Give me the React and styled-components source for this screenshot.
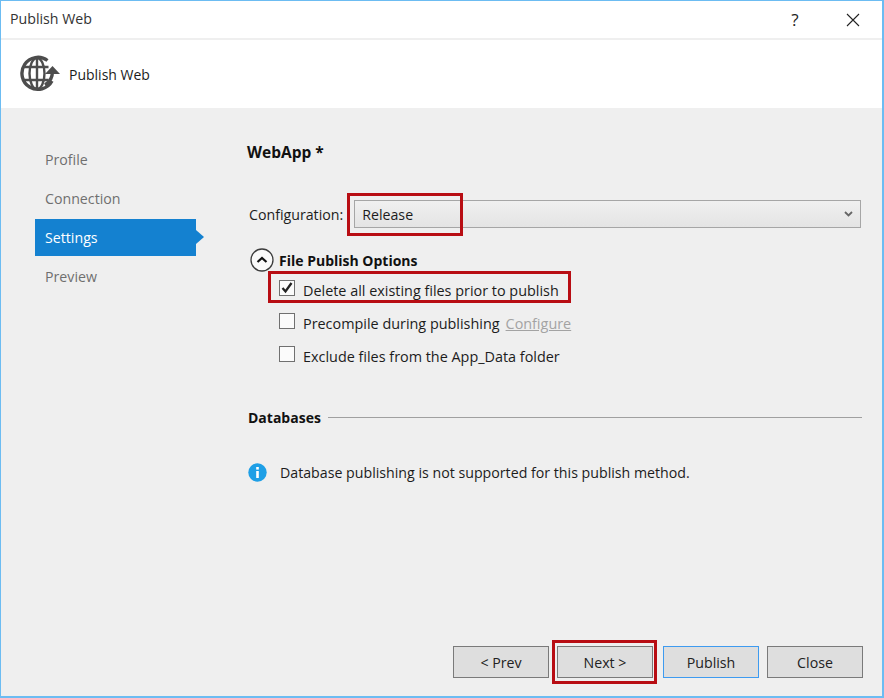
import React from "react";
import styled, { createGlobalStyle } from "styled-components";

const GlobalStyle = createGlobalStyle`
  html, body {
    margin: 0;
    padding: 0;
    background: #efefef;
  }
  * {
    box-sizing: border-box;
  }
`;

const Window = styled.div`
  width: 884px;
  height: 698px;
  display: flex;
  flex-direction: column;
  background: #efefef;
  border: 1px solid #6cbcf2;
  border-width: 1px 2px 2px 1px;
  font-family: "Open Sans", "Liberation Sans", sans-serif;
  font-size: 14.2px;
  color: #1c1c1c;
  overflow: hidden;
`;

const TitleBar = styled.div`
  height: 37px;
  flex: none;
  display: flex;
  align-items: center;
  padding: 0 19px 0 9px;
  background: #fff;
  color: #333;
`;

const TitleText = styled.span`
  flex: 1;
  margin-top: -2px;
`;

const TitleButton = styled.button`
  width: 20px;
  height: 20px;
  margin-left: 38px;
  padding: 0;
  border: 0;
  background: none;
  font: inherit;
  font-size: 17px;
  color: #222;
  display: flex;
  align-items: center;
  justify-content: center;
`;

const Header = styled.div`
  height: 68px;
  flex: none;
  margin-top: 2px;
  display: flex;
  align-items: center;
  gap: 7px;
  padding: 0 0 0 18px;
  background: #fff;
  font-size: 14px;
`;

const HeaderText = styled.span`
  margin-top: 1px;
`;

const Body = styled.div`
  flex: 1;
  display: flex;
  min-height: 0;
`;

const Sidebar = styled.nav`
  width: 195px;
  flex: none;
  padding: 33px 0 0 34px;
  display: flex;
  flex-direction: column;
  gap: 2px;
`;

const NavItem = styled.div`
  position: relative;
  width: 161px;
  height: 37px;
  padding: 0 0 1px 10px;
  display: flex;
  align-items: center;
  color: ${(props) => (props.active ? "#fff" : "#6f6f6f")};
  background: ${(props) => (props.active ? "#1481d0" : "transparent")};
  ${(props) =>
    props.active &&
    `&::after {
      content: "";
      position: absolute;
      left: 100%;
      top: 11px;
      border-left: 8px solid #1481d0;
      border-top: 7px solid transparent;
      border-bottom: 7px solid transparent;
    }`}
`;

const Main = styled.div`
  flex: 1;
  padding: 32px 21px 0 51px;
  display: flex;
  flex-direction: column;
`;

const ProfileName = styled.div`
  font-size: 15.5px;
  font-weight: 700;
  line-height: 24px;
  color: #111;
`;

const ConfigRow = styled.div`
  margin-top: 36px;
  display: flex;
  align-items: center;
  gap: 6px;
  padding-left: 2px;
`;

const Select = styled.div`
  position: relative;
  flex: 1;
  height: 28px;
  display: flex;
  align-items: center;
  justify-content: space-between;
  padding: 0 7px;
  background: linear-gradient(#f0f0f0, #e4e4e4);
  border: 1px solid #a6a6a6;
  margin-left: 5px;
`;

const Highlight = styled.span`
  position: absolute;
  top: ${(props) => props.top}px;
  left: ${(props) => props.left}px;
  width: ${(props) => props.w}px;
  height: ${(props) => props.h}px;
  border: 3px solid #b80d13;
  pointer-events: none;
`;

const SectionTitle = styled.div`
  display: flex;
  align-items: center;
  gap: 5px;
  margin-top: 20px;
  padding-left: 3px;
  height: 24px;
  font-size: 14px;
  font-weight: 700;
  color: #111;
`;

const Options = styled.div`
  padding-left: 32px;
  display: flex;
  flex-direction: column;
  gap: 9px;
  margin-top: 6px;
  font-size: 14.4px;
`;

const OptionRow = styled.div`
  position: relative;
  display: flex;
  align-items: center;
  gap: 8px;
  height: 24px;
`;

const Checkbox = styled.span`
  width: 16px;
  height: 16px;
  flex: none;
  background: #fbfbfb;
  border: 1px solid #707070;
  margin-top: -5px;
  display: flex;
  align-items: center;
  justify-content: center;
`;

const ConfigureLink = styled.span`
  margin-left: -2px;
  color: #a3a3a3;
  text-decoration: underline;
`;

const DatabasesRow = styled.div`
  margin-top: 37px;
  margin-right: -1px;
  display: flex;
  align-items: center;
  gap: 7px;
  height: 24px;
  padding-left: 1px;
  font-size: 14px;
  font-weight: 700;
  color: #111;
`;

const Rule = styled.span`
  flex: 1;
  height: 1px;
  background: #a0a0a0;
`;

const InfoRow = styled.div`
  margin-top: 31px;
  display: flex;
  align-items: center;
  gap: 13px;
  height: 24px;
  padding-left: 1px;
`;

const Footer = styled.div`
  flex: none;
  height: 50px;
  display: flex;
  justify-content: flex-end;
  padding-right: 19px;
`;

const Button = styled.button`
  position: relative;
  width: 96px;
  height: 32px;
  margin-left: ${(props) => props.gap || 8}px;
  padding: 0;
  background: #dedede;
  border: 1px solid ${(props) => (props.focused ? "#3e9bf0" : "#7a7a7a")};
  font: inherit;
  color: #222;
`;

const GlobeIcon = () => (
  <svg width="43" height="38" viewBox="0 0 43 38" fill="none">
    <g stroke="#4d4d4d">
      <path d="M28.5 5.5A16 16 0 1 0 33 26" strokeWidth="3.4" />
      <ellipse cx="18" cy="18.5" rx="7.5" ry="15.5" strokeWidth="2.4" />
      <path d="M18 3v31M4.5 12h25M4.5 25h25" strokeWidth="2.4" />
    </g>
    <path d="M26 30c5-3 7.5-8 7.5-14" stroke="#4d4d4d" strokeWidth="3.4" />
    <path d="M26 19l7.5-8 7.5 8z" fill="#4d4d4d" />
  </svg>
);

const CollapseIcon = () => (
  <svg width="24" height="24" viewBox="0 0 24 24" fill="none">
    <circle cx="12" cy="12" r="11" fill="#fafafa" stroke="#3c3c3c" strokeWidth="1.3" />
    <path d="M7.5 14l4.5-4 4.5 4" stroke="#111" strokeWidth="2.2" />
  </svg>
);

const InfoIcon = () => (
  <svg width="19" height="19" viewBox="0 0 19 19">
    <circle cx="9.5" cy="9.5" r="9.2" fill="#1e9fe6" />
    <rect x="8.2" y="8" width="2.6" height="7" fill="#fff" />
    <rect x="8.2" y="4" width="2.6" height="2.6" fill="#fff" />
  </svg>
);

const navItems = ["Profile", "Connection", "Settings", "Preview"];

export default function App() {
  return (
    <>
      <GlobalStyle />
      <Window>
        <TitleBar>
          <TitleText>Publish Web</TitleText>
          <TitleButton>?</TitleButton>
          <TitleButton>
            <svg width="14" height="14" viewBox="0 0 14 14">
              <path d="M1 1l12 12M13 1L1 13" stroke="#222" strokeWidth="1.1" />
            </svg>
          </TitleButton>
        </TitleBar>
        <Header>
          <GlobeIcon />
          <HeaderText>Publish Web</HeaderText>
        </Header>
        <Body>
          <Sidebar>
            {navItems.map((item) => (
              <NavItem key={item} active={item === "Settings"}>
                {item}
              </NavItem>
            ))}
          </Sidebar>
          <Main>
            <ProfileName>WebApp *</ProfileName>
            <ConfigRow>
              <span>Configuration:</span>
              <Select>
                <span>Release</span>
                <svg width="9" height="6" viewBox="0 0 9 6" fill="none">
                  <path d="M1 1l3.5 3.5L8 1" stroke="#666" strokeWidth="1.8" />
                </svg>
                <Highlight top={-8} left={-8} w={116} h={43} />
              </Select>
            </ConfigRow>
            <SectionTitle>
              <CollapseIcon />
              File Publish Options
            </SectionTitle>
            <Options>
              <OptionRow>
                <Checkbox>
                  <svg width="12" height="12" viewBox="0 0 12 12" fill="none">
                    <path d="M1.5 6l3 3.5 6-8.5" stroke="#222" strokeWidth="2.3" />
                  </svg>
                </Checkbox>
                <span>Delete all existing files prior to publish</span>
                <Highlight top={-7} left={-11} w={303} h={32} />
              </OptionRow>
              <OptionRow>
                <Checkbox />
                <span>Precompile during publishing</span>
                <ConfigureLink>Configure</ConfigureLink>
              </OptionRow>
              <OptionRow>
                <Checkbox />
                <span>Exclude files from the App_Data folder</span>
              </OptionRow>
            </Options>
            <DatabasesRow>
              <span>Databases</span>
              <Rule />
            </DatabasesRow>
            <InfoRow>
              <InfoIcon />
              <span>Database publishing is not supported for this publish method.</span>
            </InfoRow>
          </Main>
        </Body>
        <Footer>
          <Button>&lt; Prev</Button>
          <Button>
            Next &gt;
            <Highlight top={-7} left={-6} w={105} h={44} />
          </Button>
          <Button focused gap={10}>Publish</Button>
          <Button>Close</Button>
        </Footer>
      </Window>
    </>
  );
}
